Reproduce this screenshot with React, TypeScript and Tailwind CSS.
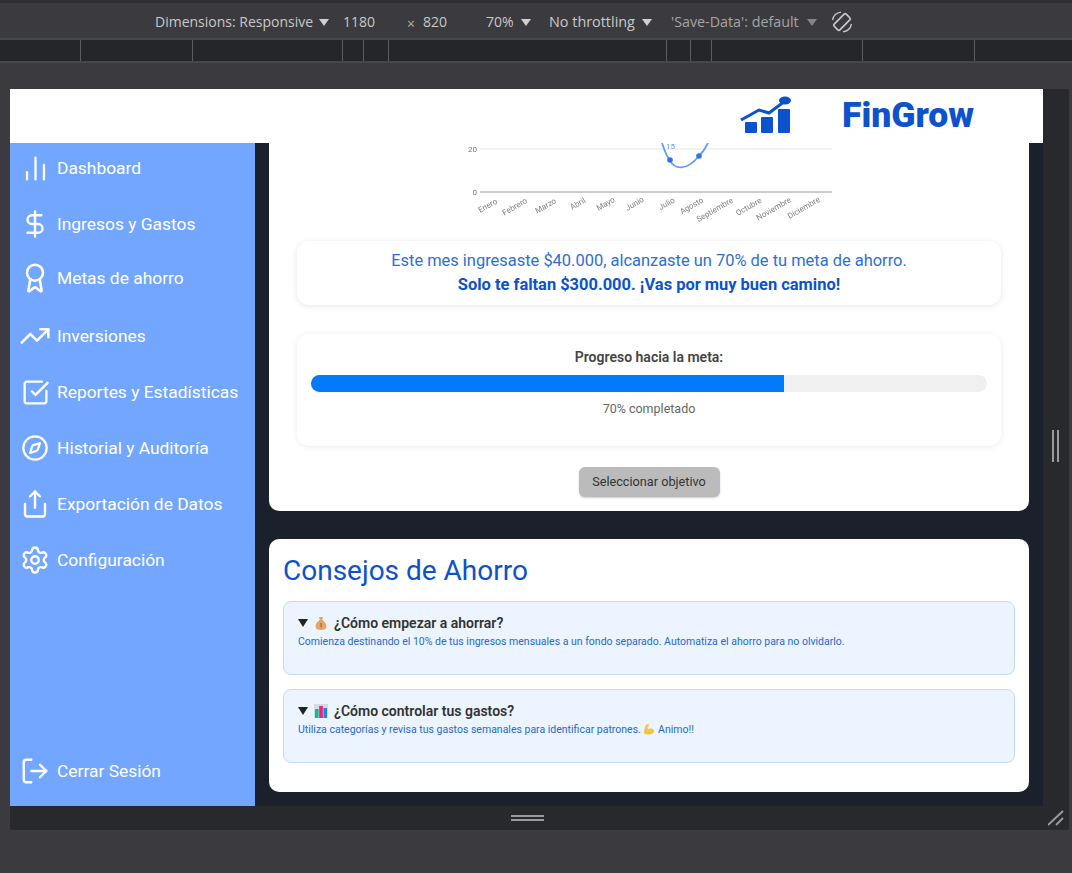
import { Award, ChartNoAxesColumn, Compass, DollarSign, LogOut, Settings, Share, SquareCheckBig, TrendingUp } from 'lucide-react';

const rulerSegments = ['w-[81px]', 'w-[112px]', 'w-[150px]', 'w-[21px]', 'w-[25px]', 'w-[278px]', 'w-[24px]', 'w-[21px]', 'w-[151px]', 'w-[112px]'];

const navItems = [
  { label: 'Dashboard', icon: ChartNoAxesColumn, size: 29, gap: 'mb-[28px]' },
  { label: 'Ingresos y Gastos', icon: DollarSign, size: 30, gap: 'mb-[26px]' },
  { label: 'Metas de ahorro', icon: Award, size: 32, gap: 'mb-[30px]' },
  { label: 'Inversiones', icon: TrendingUp, size: 32, gap: 'mb-[28px]' },
  { label: 'Reportes y Estadísticas', icon: SquareCheckBig, size: 29, gap: 'mb-[28px]' },
  { label: 'Historial y Auditoría', icon: Compass, size: 28, gap: 'mb-[28px]' },
  { label: 'Exportación de Datos', icon: Share, size: 30, gap: 'mb-[28px]' },
  { label: 'Configuración', icon: Settings, size: 30, gap: 'mb-[28px]' },
];

const months = [
  ['Enero', 220, 65],
  ['Febrero', 247, 66],
  ['Marzo', 278, 65],
  ['Abril', 310, 63],
  ['Mayo', 338, 63],
  ['Junio', 367, 63],
  ['Julio', 399, 63],
  ['Agosto', 424, 65],
  ['Septiembre', 447, 69],
  ['Octubre', 481, 66],
  ['Noviembre', 506, 68],
  ['Diciembre', 536, 67],
] as const;

function Caret({ dim }: { dim?: boolean }) {
  return (
    <svg viewBox="0 0 10 7" className="w-[10px] h-[7px] mt-[2px]">
      <path d="M0 0h10L5 7z" fill={dim ? '#85858a' : '#d0d0d0'} />
    </svg>
  );
}

function DevToolbar() {
  return (
    <div className="h-[38px] flex items-center bg-[#3b3a3e] border-t-[3px] border-[#2e2e30] text-[14px] text-[#c9c9c9] font-['Open_Sans',sans-serif] pt-[2px]">
      <span className="ml-[155px] w-[158px] whitespace-nowrap">Dimensions: Responsive</span>
      <span className="ml-[6px]"><Caret /></span>
      <span className="ml-[14px] w-[32px]">1180</span>
      <span className="ml-[32px] mt-[4px] text-[#b0b0b0]">×</span>
      <span className="ml-[8px] w-[26px]">820</span>
      <span className="ml-[37px] w-[29px]">70%</span>
      <span className="ml-[6px]"><Caret /></span>
      <span className="ml-[18px] w-[87px] whitespace-nowrap text-[14.400px]">No throttling</span>
      <span className="ml-[6px]"><Caret /></span>
      <span className="ml-[19px] w-[128px] whitespace-nowrap text-[14.300px] text-[#a5a5a8]">'Save-Data': default</span>
      <span className="ml-[8px]"><Caret dim /></span>
      <svg viewBox="0 0 24 24" className="ml-[13px] w-[24px] h-[24px]" fill="none" stroke="#c9c9c9" strokeWidth="1.7">
        <rect x="8" y="3.500" width="8" height="17" rx="1.500" transform="rotate(45 12 12)" />
        <path d="M2.500 10A10 10 0 0 1 11 2.200M21.500 14A10 10 0 0 1 13 21.800" strokeWidth="1.300" />
      </svg>
    </div>
  );
}

function Logo() {
  return (
    <svg viewBox="0 0 54 40" className="w-[54px] h-[40px]" fill="#0b52cc">
      <rect x="5" y="26" width="12" height="11" rx="1" />
      <rect x="21" y="21" width="12" height="16" rx="1" />
      <rect x="38" y="13" width="12" height="24" rx="1" />
      <path d="M1 24 L19 14 L29 17 L45 5" fill="none" stroke="#0b52cc" strokeWidth="3" />
      <ellipse cx="45" cy="4.500" rx="6" ry="4" />
    </svg>
  );
}

function Sidebar() {
  return (
    <aside className="w-[245px] bg-[#73a7ff] flex flex-col justify-between pt-[11px] pb-[21px] text-white text-[17.400px]">
      <nav>
        {navItems.map(({ label, icon: Icon, size, gap }) => (
          <div key={label} className={`flex items-center h-[28px] ${gap}`}>
            <div className="w-[44px] ml-[3px] flex justify-center">
              <Icon size={size} strokeWidth={1.9} />
            </div>
            <span className="whitespace-nowrap mt-[1px]">{label}</span>
          </div>
        ))}
      </nav>
      <div className="flex items-center h-[28px]">
        <div className="w-[44px] ml-[3px] flex justify-center">
          <LogOut size={30} strokeWidth={1.9} />
        </div>
        <span className="mt-[1px]">Cerrar Sesión</span>
      </div>
    </aside>
  );
}

function SavingsChart() {
  return (
    <svg viewBox="0 0 760 98" className="w-[760px] h-[98px] blur-[0.4px]">
      <text x="208" y="9" fontSize="8" fill="#777" textAnchor="end">20</text>
      <text x="208" y="52" fontSize="8" fill="#777" textAnchor="end">0</text>
      <line x1="211" y1="6" x2="563" y2="6" stroke="#e6e6e6" />
      <line x1="211" y1="49" x2="563" y2="49" stroke="#999" />
      <path d="M393 0 C396 9 398 15 401 17 C405 26 417 29 430 13 C434 9 437 4 439 0" fill="none" stroke="#639cf8" strokeWidth="1.800" />
      <circle cx="401" cy="17" r="2.800" fill="#2f74ee" />
      <circle cx="430" cy="13" r="2.800" fill="#2f74ee" />
      <text x="397" y="6" fontSize="8" fill="#639cf8">15</text>
      {months.map(([name, x, y]) => (
        <text key={name} x={x} y={y} fontSize="8" fill="#808080" textAnchor="middle" transform={`rotate(-30 ${x} ${y})`}>
          {name}
        </text>
      ))}
    </svg>
  );
}

function MoneyBag() {
  return (
    <svg viewBox="0 0 14 14" className="w-[14px] h-[14px] inline-block">
      <path d="M5 1h4L8.300 4C11 6 12.500 8 12.500 10.500S10 14 7 14 1.500 13 1.500 10.500 3 6 5.700 4z" fill="#e2a868" />
      <rect x="6.500" y="7" width="1.200" height="4.500" fill="#9c6a35" />
    </svg>
  );
}

function BarsEmoji() {
  return (
    <svg viewBox="0 0 14 14" className="w-[14px] h-[14px] inline-block">
      <rect x="0" y="0" width="14" height="14" fill="#d3dbe3" />
      <rect x="1" y="5" width="3.600" height="9" fill="#0cbf8f" />
      <rect x="5.200" y="2" width="3.600" height="12" fill="#ee1f7d" />
      <rect x="9.400" y="4" width="3.600" height="10" fill="#1f86dd" />
    </svg>
  );
}

function FlexedArm() {
  return (
    <svg viewBox="0 0 12 12" className="w-[12px] h-[12px] inline-block align-[-2px]">
      <path d="M1 10C1 6 2.500 3 3.500 1L6 1.500 5.500 3.500 4.500 4 5 6.500C7 5 10 5 11 7.500 11.500 10 9 11.500 6 11.500 3.500 11.500 1.500 11 1 10z" fill="#f6c443" />
    </svg>
  );
}

function Tip({ emoji, title, children }: { emoji: React.ReactNode; title: string; children: React.ReactNode }) {
  return (
    <div className="rounded-[8px] border border-[#bfdbfe] bg-[#ebf4ff] pl-[14px] pt-[11px] h-[74px]">
      <div className="flex items-center text-[14px] leading-[20px] font-semibold text-[#333]">
        <svg viewBox="0 0 10 8" className="w-[10px] h-[8px] mr-[6px]"><path d="M0 0h10L5 8z" fill="#222" /></svg>
        <span className="mr-[6px] flex items-center">{emoji}</span>
        {title}
      </div>
      <p className="text-[10.500px] leading-[14px] mt-[2px] text-[#2a68d0]">{children}</p>
    </div>
  );
}

export default function App() {
  return (
    <div className="w-[1072px] h-[873px] overflow-hidden bg-[#3b3a3e] font-['Roboto',sans-serif]">
      <DevToolbar />

      <div className="h-[25px] flex bg-[#252629] border-y-2 border-[#47474b]">
        {rulerSegments.map((w, i) => (
          <div key={i} className={`${w} border-r-[1.5px] border-[#5c5c60]`} />
        ))}
      </div>

      <div className="h-[26px]" />

      <div className="ml-[10px] w-[1059px]">
        <div className="flex h-[717px]">
          <div className="w-[1033px] flex flex-col">
            <header className="h-[54px] bg-white flex items-center justify-end pr-[69px]">
              <div className="mb-[1px]"><Logo /></div>
              <span className="ml-[48px] text-[35.500px] font-black text-[#0b52cc] leading-none">FinGrow</span>
            </header>
            <div className="flex flex-1 min-h-0">
              <Sidebar />
              <main className="flex-1 bg-[#1a202c] px-[14px]">
                <section className="h-[368px] bg-white rounded-b-[10px] flex flex-col items-center">
                  <SavingsChart />
                  <div className="w-[704px] h-[64px] rounded-[12px] bg-white shadow-[0_1px_6px_rgba(0,0,0,0.1)] flex flex-col items-center justify-center text-[16.450px] leading-[24px] text-[#2f6fd2]">
                    <p>Este mes ingresaste $40.000, alcanzaste un 70% de tu meta de ahorro.</p>
                    <p className="font-bold text-[#0b52cc]">Solo te faltan $300.000. ¡Vas por muy buen camino!</p>
                  </div>
                  <div className="mt-[29px] w-[704px] h-[112px] rounded-[12px] bg-white shadow-[0_1px_6px_rgba(0,0,0,0.08)] px-[14px] pt-[14px] flex flex-col items-center">
                    <p className="text-[14px] leading-[18px] font-semibold text-[#444]">Progreso hacia la meta:</p>
                    <div className="mt-[9px] w-full h-[17px] rounded-full bg-[#f0f0f0] overflow-hidden">
                      <div className="w-[70%] h-full bg-[#007bff]" />
                    </div>
                    <p className="mt-[9px] text-[12.500px] leading-[16px] text-[#666]">70% completado</p>
                  </div>
                  <button type="button" className="mt-[21px] w-[141px] h-[30px] rounded-[6px] bg-[#bbbbbb] text-[12.700px] text-[#333] shadow-[0_1px_2px_rgba(0,0,0,0.2)]">
                    Seleccionar objetivo
                  </button>
                </section>

                <section className="mt-[28px] h-[253px] bg-white rounded-[10px] px-[14px] pt-[14px]">
                  <h2 className="text-[28px] leading-[36px] text-[#0b52cc]">Consejos de Ahorro</h2>
                  <div className="mt-[12px] flex flex-col gap-[14px]">
                    <Tip emoji={<MoneyBag />} title="¿Cómo empezar a ahorrar?">
                      Comienza destinando el 10% de tus ingresos mensuales a un fondo separado. Automatiza el ahorro para no olvidarlo.
                    </Tip>
                    <Tip emoji={<BarsEmoji />} title="¿Cómo controlar tus gastos?">
                      Utiliza categorías y revisa tus gastos semanales para identificar patrones. <FlexedArm /> Animo!!
                    </Tip>
                  </div>
                </section>
              </main>
            </div>
          </div>

          <div className="flex-1 bg-[#28292c] flex items-center justify-center pr-[1px]">
            <div className="w-[7px] h-[32px] mt-[-4px] border-x-2 border-[#9a9a9d]" />
          </div>
        </div>

        <div className="h-[24px] bg-[#28292c] flex items-center">
          <div className="ml-[501px] w-[33px] h-[6px] border-y-2 border-[#9a9a9d]" />
          <svg viewBox="0 0 16 16" className="ml-auto mr-[5px] w-[16px] h-[16px]" stroke="#9a9a9d" strokeWidth="2">
            <path d="M0 15L15 1M8 15L15 8" />
          </svg>
        </div>
      </div>
    </div>
  );
}
